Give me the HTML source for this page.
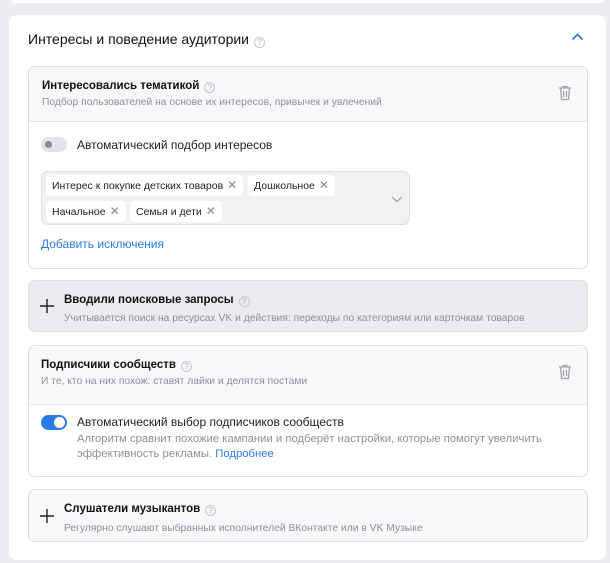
<!DOCTYPE html>
<html><head><meta charset="utf-8"><style>
*{box-sizing:border-box;margin:0;padding:0}
body{width:610px;height:563px;background:#ebedf0;font-family:"Liberation Sans",Arial,sans-serif;position:relative;overflow:hidden;color:#000}
.top{position:absolute;left:9px;top:-10px;width:597px;height:13px;background:#fff;border-radius:8px}
.card{position:absolute;left:9px;top:15px;width:597px;height:545px;background:#fff;border-radius:8px}
.title{position:absolute;left:28px;top:31px;font-size:14px;color:#111}
.q{display:inline-block;width:11px;height:11px;border:1px solid #c4c8cc;border-radius:50%;font-size:8px;color:#b0b4b8;text-align:center;line-height:9px;vertical-align:-1px;margin-left:5px;font-weight:normal}
.box{position:absolute;left:28px;width:560px;border:1px solid #dcdfe3;border-radius:7px;overflow:hidden}
.hd{background:#f7f8fa;position:relative}
.h{font-size:11.5px;font-weight:bold;color:#111}
.s{font-size:10.3px;color:#8c9196;margin-top:4px}
.trash{position:absolute;right:15px}
.plus{position:absolute;left:11px}
.tog{position:absolute;width:26px;height:15px;border-radius:8px}
.chip{position:absolute;background:#fff;border-radius:4px;height:21px;font-size:10.5px;line-height:21px;padding:0 6px;color:#222}
.chip span{color:#888;margin-left:4px;font-size:12px}
</style></head><body>
<div class="top"></div>
<div class="card"></div>
<div class="title">Интересы и поведение аудитории<span class="q">?</span></div>
<svg style="position:absolute;left:571px;top:33px" width="13" height="8"><path d="M1.5 6.5L6.5 1.5 11.5 6.5" fill="none" stroke="#2c7ce5" stroke-width="1.8"/></svg>

<div class="box" style="top:66px;height:203px">
 <div class="hd" style="height:55px;border-bottom:1px solid #e3e5e8;padding:13px 0 0 13px">
  <div class="h">Интересовались тематикой<span class="q">?</span></div>
  <div class="s">Подбор пользователей на основе их интересов, привычек и увлечений</div>
  <svg class="trash" style="top:18px" width="14" height="16"><path d="M1 3h12M5 3V1.5h4V3M2.5 3l1 11.5h7l1-11.5M5.5 6v6M8.5 6v6" fill="none" stroke="#a0a4a9" stroke-width="1.3"/></svg>
 </div>
 <div class="tog" style="left:12px;top:70px;background:#e1e3e6"><div style="position:absolute;left:4px;top:4px;width:7px;height:7px;border-radius:50%;background:#818c99"></div></div>
 <div style="position:absolute;left:48px;top:71px;font-size:12px;color:#222">Автоматический подбор интересов</div>
 <div style="position:absolute;left:12px;top:104px;width:369px;height:54px;background:#f0f1f3;border:1px solid #dcdfe3;border-radius:7px">
  <div class="chip" style="left:4px;top:3px">Интерес к покупке детских товаров<span>✕</span></div>
  <div class="chip" style="left:206px;top:3px">Дошкольное<span>✕</span></div>
  <div class="chip" style="left:4px;top:29px">Начальное<span>✕</span></div>
  <div class="chip" style="left:88px;top:29px">Семья и дети<span>✕</span></div>
  <svg style="position:absolute;left:349px;top:24px" width="12" height="7"><path d="M1 1l5 4.5L11 1" fill="none" stroke="#a6abb0" stroke-width="1.4"/></svg>
 </div>
 <div style="position:absolute;left:12px;top:170px;font-size:12px;color:#2c7ce5">Добавить исключения</div>
</div>

<div class="box" style="top:280px;height:52px;background:#ebecef">
 <svg class="plus" style="top:18px" width="14" height="14"><path d="M7 0v14M0 7h14" stroke="#222" stroke-width="1.4"/></svg>
 <div style="position:absolute;left:35px;top:13px" class="h">Вводили поисковые запросы<span class="q">?</span></div>
 <div style="position:absolute;left:35px;top:28px" class="s">Учитывается поиск на ресурсах VK и действия: переходы по категориям или карточкам товаров</div>
</div>

<div class="box" style="top:345px;height:132px">
 <div class="hd" style="height:59px;border-bottom:1px solid #e3e5e8;padding:13px 0 0 12px">
  <div class="h">Подписчики сообществ<span class="q">?</span></div>
  <div class="s">И те, кто на них похож: ставят лайки и делятся постами</div>
  <svg class="trash" style="top:18px" width="14" height="16"><path d="M1 3h12M5 3V1.5h4V3M2.5 3l1 11.5h7l1-11.5M5.5 6v6M8.5 6v6" fill="none" stroke="#a0a4a9" stroke-width="1.3"/></svg>
 </div>
 <div class="tog" style="left:12px;top:69px;background:#2c7ce5"><div style="position:absolute;right:2px;top:2px;width:11px;height:11px;border-radius:50%;background:#fff"></div></div>
 <div style="position:absolute;left:48px;top:69px;font-size:12px;color:#222">Автоматический выбор подписчиков сообществ</div>
 <div style="position:absolute;left:48px;top:86px;font-size:11.3px;line-height:15px;color:#8c9196;width:505px">Алгоритм сравнит похожие кампании и подберёт настройки, которые помогут увеличить эффективность рекламы. <span style="color:#2c7ce5">Подробнее</span></div>
</div>

<div class="box" style="top:489px;height:53px;background:#f7f8fa">
 <svg class="plus" style="top:19px" width="14" height="14"><path d="M7 0v14M0 7h14" stroke="#222" stroke-width="1.4"/></svg>
 <div style="position:absolute;left:35px;top:13px" class="h">Слушатели музыкантов<span class="q">?</span></div>
 <div style="position:absolute;left:35px;top:29px" class="s">Регулярно слушают выбранных исполнителей ВКонтакте или в VK Музыке</div>
</div>
</body></html>
